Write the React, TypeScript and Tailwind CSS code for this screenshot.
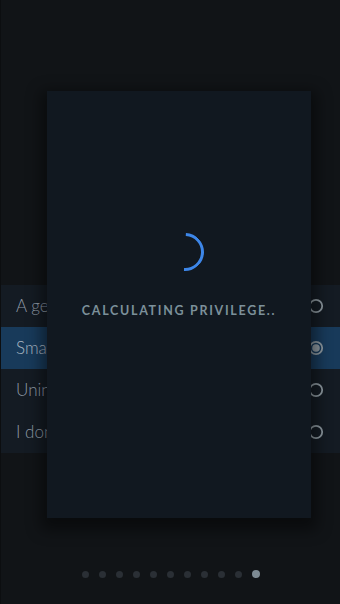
import React from "react";

const options = [
  { label: "A generous amount", selected: false },
  { label: "Small amount", selected: true },
  { label: "Uninformed", selected: false },
  { label: "I don't know", selected: false },
];

function Radio({ selected }: { selected: boolean }) {
  return (
    <svg width="16" height="16" viewBox="0 0 16 16">
      <circle cx="8" cy="8" r="6.2" fill="none" stroke="#8d989f" strokeWidth="1.8" />
      {selected && <circle cx="8" cy="8" r="3.8" fill="#8d989f" />}
    </svg>
  );
}

export default function App() {
  return (
    <div
      className="relative h-[604px] w-[340px] overflow-hidden bg-[#111417] border-l border-[#0c0e10]"
      style={{ fontFamily: "Lato, 'Open Sans', sans-serif" }}
    >
      <div className="flex h-full flex-col">
        <div className="h-[285px] shrink-0" />
        <div className="flex flex-col bg-[#141b23]">
          {options.map((o) => (
            <div
              key={o.label}
              className={
                "flex h-[42px] items-center justify-between pl-[15px] pr-[16px] " +
                (o.selected ? "bg-[#183a5a] text-[#a9b6c2]" : "text-[#8e99a3]")
              }
            >
              <span className="text-[17px] font-light whitespace-nowrap">{o.label}</span>
              <Radio selected={o.selected} />
            </div>
          ))}
        </div>
        <div className="flex-1" />
        <div className="flex items-center justify-center gap-[10px] pb-[26px]">
          {Array.from({ length: 11 }).map((_, i) => (
            <div
              key={i}
              className={
                "rounded-full " +
                (i === 10 ? "bg-[#7d8a93] h-[8px] w-[8px]" : "bg-[#2a2f35] h-[7px] w-[7px]")
              }
            />
          ))}
        </div>
      </div>

      <div className="absolute left-[46px] top-[91px] flex h-[427px] w-[264px] flex-col items-center bg-[#111820] shadow-[0_6px_14px_6px_rgba(0,0,0,0.45)]">
        <div className="h-[142px] shrink-0" />
        <div className="ml-[12px] h-[38px] w-[38px] rotate-[-42deg] rounded-full border-[3px] border-transparent border-r-[#3d86e8] border-b-[#3d86e8]" />
        <div className="mt-[32px] text-[12.5px] font-bold leading-[16px] tracking-[0.135em] text-[#7c909a]">
          CALCULATING PRIVILEGE..
        </div>
      </div>
    </div>
  );
}
